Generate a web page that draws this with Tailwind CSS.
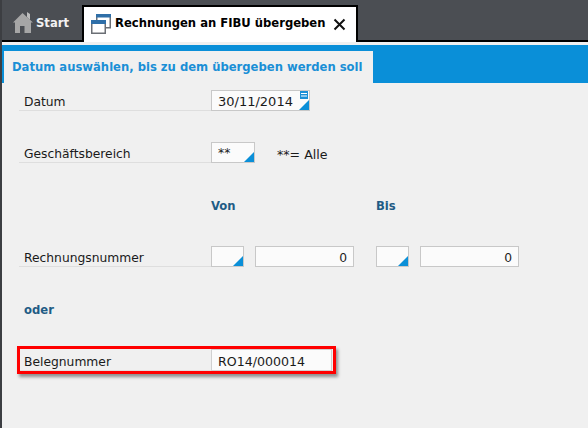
<!DOCTYPE html>
<html lang="de">
<head>
  <meta charset="UTF-8" />
  <title>Rechnungen an FIBU übergeben</title>
  <script src="https://cdn.jsdelivr.net/npm/@tailwindcss/browser@4"></script>
</head>
<body class="w-[588px] h-[428px] overflow-hidden bg-[#f0f0f0] font-['DejaVu_Sans',sans-serif] text-[12.3px] text-[#1a1a1a]">
  <div class="h-[428px] border-l-2 border-[#3c3e42]">
    <!-- Tabs -->
    <header class="flex items-end h-[40px] bg-[#4b4e53] border-b-2 border-black box-content">
      <div class="flex items-center gap-[3px] w-[80px] h-[36px] pt-[3px] pl-[11px] font-bold text-[11.6px] text-[#f2f2f2]">
        <svg width="20" height="21" viewBox="0 0 20 21" class="-mt-[2px] shrink-0">
          <path d="M14 0 L17 2 L17 8 L14 5 Z" fill="#bdbdbd" />
          <path d="M0 10.5 L9.5 1 L20 10.5 L18 10.5 L18 21 L11.5 21 L11.5 14 L7 14 L7 21 L2 21 L2 10.5 Z" fill="#a6a6a6" />
        </svg>
        <span>Start</span>
      </div>
      <div class="relative flex items-center w-[276px] h-[37px] -mb-[2px] pl-[7px] pb-[1px] bg-white border-t-2 border-x-2 border-black font-bold text-[11.6px] text-black">
        <svg width="20" height="20" viewBox="0 0 20 20" class="shrink-0">
          <path d="M5.75 0 V7 M19.25 0 V13.75 H15" fill="none" stroke="#6b6f75" stroke-width="1.5" />
          <rect x="5" y="0" width="15" height="3.5" fill="#2f6fa8" />
          <rect x="0.75" y="6.75" width="13.5" height="12.5" fill="white" stroke="#6b6f75" stroke-width="1.5" />
          <rect x="0" y="6" width="15" height="4" fill="#2f6fa8" />
        </svg>
        <span class="ml-[4px] whitespace-nowrap">Rechnungen an FIBU übergeben</span>
        <svg width="13" height="13" viewBox="0 0 13 13" class="ml-[8px] shrink-0">
          <path d="M1.5 1.5 L11.5 11.5 M11.5 1.5 L1.5 11.5" stroke="#111" stroke-width="2" />
        </svg>
      </div>
    </header>

    <!-- Title band -->
    <div class="mt-[3px] h-[38px] pt-[6px] pl-[2px] bg-[#0a8fd8]">
      <div class="flex items-center w-[369px] h-[32px] pt-[2px] pl-[8px] bg-[#f0f0f0] font-bold text-[11.6px] text-[#1a8fd6] whitespace-nowrap">
        Datum auswählen, bis zu dem übergeben werden soll
      </div>
    </div>

    <!-- Form -->
    <main class="pt-[7px]">
      <div class="flex h-[21px]">
        <div class="w-[192px] ml-[17px] pl-[5px] border-b border-[#dedede] leading-[25px]">Datum</div>
        <div class="relative w-[99px] h-[21px] pl-[6px] text-[13px] bg-[#fbfbfb] border border-[#c8c8c8] leading-[22px]">
          30/11/2014
          <svg width="8" height="8" viewBox="0 0 8 8" class="absolute top-0 right-[1px]">
            <rect width="8" height="8" fill="#1a8fd6" />
            <path d="M1 2.5 H7 M1 5 H7" stroke="white" />
          </svg>
          <span class="absolute right-0 bottom-0 w-[10px] h-[10px] bg-[#0a8fd8] [clip-path:polygon(100%_0,100%_100%,0_100%)]"></span>
        </div>
      </div>

      <div class="flex h-[21px] mt-[31px]">
        <div class="w-[192px] ml-[17px] pl-[5px] border-b border-[#dedede] leading-[25px]">Geschäftsbereich</div>
        <div class="relative w-[44px] h-[21px] pl-[6px] bg-[#fbfbfb] border border-[#c8c8c8] leading-[20px]">
          **
          <span class="absolute right-0 bottom-0 w-[10px] h-[10px] bg-[#0a8fd8] [clip-path:polygon(100%_0,100%_100%,0_100%)]"></span>
        </div>
        <span class="ml-[22px] text-[12.6px] leading-[25px]">**= Alle</span>
      </div>

      <div class="flex h-[16px] mt-[34px] font-bold text-[11.6px] text-[#1f5c85] leading-[18px]">
        <span class="ml-[209px] w-[165px]">Von</span>
        <span>Bis</span>
      </div>

      <div class="flex h-[21px] mt-[33px]">
        <div class="w-[192px] ml-[17px] pl-[5px] border-b border-[#dedede] leading-[25px]">Rechnungsnummer</div>
        <div class="relative w-[33px] h-[21px] bg-[#fbfbfb] border border-[#c8c8c8]">
          <span class="absolute right-0 bottom-0 w-[10px] h-[10px] bg-[#0a8fd8] [clip-path:polygon(100%_0,100%_100%,0_100%)]"></span>
        </div>
        <div class="ml-[11px] w-[99px] h-[21px] pr-[6px] text-right bg-[#fbfbfb] border border-[#c8c8c8] leading-[22px]">0</div>
        <div class="relative ml-[22px] w-[33px] h-[21px] bg-[#fbfbfb] border border-[#c8c8c8]">
          <span class="absolute right-0 bottom-0 w-[10px] h-[10px] bg-[#0a8fd8] [clip-path:polygon(100%_0,100%_100%,0_100%)]"></span>
        </div>
        <div class="ml-[11px] w-[99px] h-[21px] pr-[6px] text-right bg-[#fbfbfb] border border-[#c8c8c8] leading-[22px]">0</div>
      </div>

      <div class="h-[16px] mt-[34px] ml-[22px] font-bold text-[11.6px] text-[#1f5c85] leading-[18px]">oder</div>

      <!-- red marker round the field -->
      <div class="flex items-center w-[319px] h-[28px] mt-[29px] ml-[15px] border-[3px] border-[#ff0000] shadow-[2px_3px_3px_rgba(0,0,0,0.4)]">
        <div class="w-[191px] h-[22px] pl-[4px] border-b border-[#dedede] leading-[26px]">Belegnummer</div>
        <div class="w-[121px] h-[22px] pl-[6px] text-[12.6px] bg-[#fbfbfb] border border-[#d0d0d0] leading-[24px]">RO14/000014</div>
      </div>
    </main>
  </div>
</body>
</html>
